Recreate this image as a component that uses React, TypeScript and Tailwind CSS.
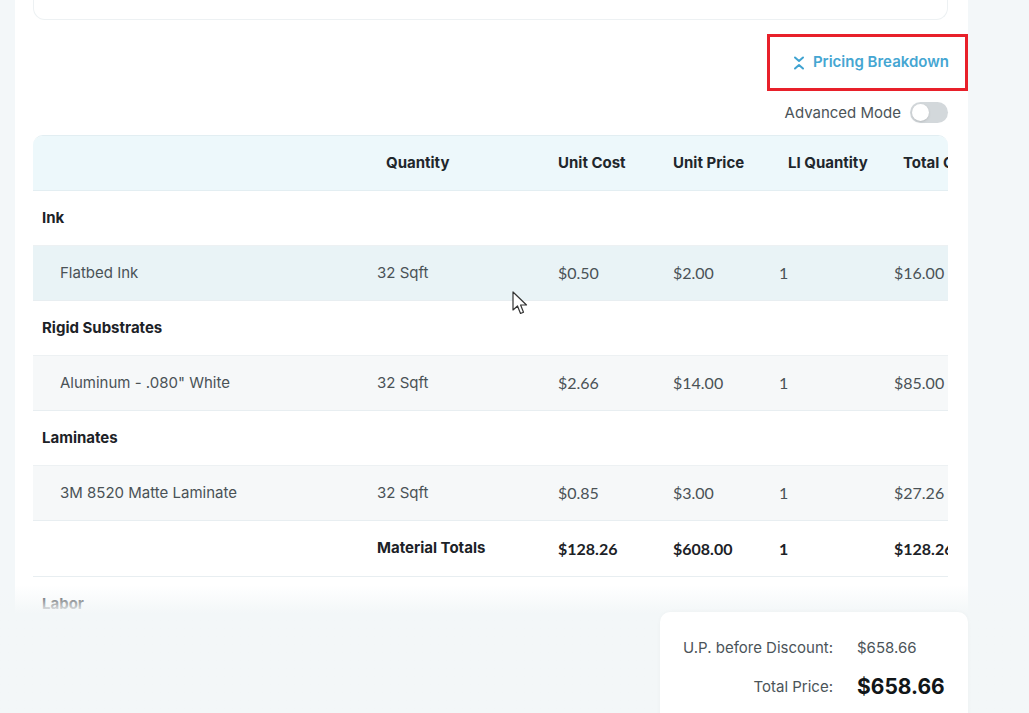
import React from "react";

const plex = { fontFamily: "Inter, 'Noto Sans', sans-serif" };
const lato = { fontFamily: "Lato, 'Noto Sans', sans-serif" };

type Row =
  | { kind: "cat"; name: string }
  | { kind: "item"; name: string; qty: string; cost: string; price: string; li: string; total: string; bg: string };

const rows: Row[] = [
  { kind: "cat", name: "Ink" },
  { kind: "item", name: "Flatbed Ink", qty: "32 Sqft", cost: "$0.50", price: "$2.00", li: "1", total: "$16.00", bg: "bg-[#e9f3f6]" },
  { kind: "cat", name: "Rigid Substrates" },
  { kind: "item", name: 'Aluminum - .080" White', qty: "32 Sqft", cost: "$2.66", price: "$14.00", li: "1", total: "$85.00", bg: "bg-[#f6f8f9]" },
  { kind: "cat", name: "Laminates" },
  { kind: "item", name: "3M 8520 Matte Laminate", qty: "32 Sqft", cost: "$0.85", price: "$3.00", li: "1", total: "$27.26", bg: "bg-[#f6f8f9]" },
];

const grid = "grid grid-cols-[335px_181px_115px_106px_115px_140px] w-[992px]";

export default function App() {
  return (
    <div className="relative w-full h-[713px] overflow-hidden bg-[#f3f7f9] flex" style={plex}>
      <div className="w-[15px] shrink-0" />
      <div className="w-[953px] shrink-0 bg-white pl-[18px] pr-[20px] flex flex-col">
        {/* top card (cut off) */}
        <div className="-mt-[20px] h-[40px] rounded-b-xl border border-[#edf1f3] border-t-0 bg-white" />

        {/* pricing breakdown link */}
        <div className="flex justify-end mt-[14px] -mr-[20px]">
          <div className="w-[201px] h-[57px] border-[3px] border-[#e8202a] flex items-center justify-end pr-[16px] gap-[8px]">
            <svg width="12" height="14" viewBox="0 0 12 14" fill="none" stroke="#3fa3d1" strokeWidth="2" strokeLinecap="round" strokeLinejoin="round">
              <path d="M2 1.5 L6 5 L10 1.5" />
              <path d="M2 12.5 L6 9 L10 12.5" />
            </svg>
            <span className="text-[15px] font-semibold text-[#45a6d2]">Pricing Breakdown</span>
          </div>
        </div>

        {/* advanced mode */}
        <div className="flex justify-end items-center gap-[9px] mt-[10px] h-[22px]">
          <span className="text-[15px] text-[#4b5459] pt-[2px]">Advanced Mode</span>
          <div className="w-[38px] h-[21px] rounded-full bg-[#d3d8db] flex items-center px-[2px]">
            <div className="w-[17px] h-[17px] rounded-full bg-white shadow-sm" />
          </div>
        </div>

        {/* table */}
        <div className="mt-[12px] w-[915px] overflow-hidden rounded-t-[10px] border-t border-[#e2eef2]">
          <div className={`${grid} h-[55px] items-center bg-[#edf8fb] border-b border-[#e3eef2] text-[15px] font-bold text-[#1f272c]`}>
            <div />
            <div className="pl-[18px]">Quantity</div>
            <div className="pl-[9px]">Unit Cost</div>
            <div className="pl-[9px]">Unit Price</div>
            <div className="pl-[18px]">LI Quantity</div>
            <div className="pl-[18px] whitespace-nowrap">Total Cost</div>
          </div>
          {rows.map((r, i) =>
            r.kind === "cat" ? (
              <div key={i} className={`${grid} h-[55px] items-center bg-white border-b border-[#edf1f3]`}>
                <div className="pl-[9px] text-[15px] font-bold text-[#1c2227]">{r.name}</div>
              </div>
            ) : (
              <div key={i} className={`${grid} h-[55px] items-center ${r.bg} border-b border-[#e8eef1] text-[#4a5256]`}>
                <div className="pl-[27px] text-[15px]">{r.name}</div>
                <div className="pl-[9px] text-[15px]">{r.qty}</div>
                <div className="pl-[9px] text-[16px]" style={lato}>{r.cost}</div>
                <div className="pl-[9px] text-[16px]" style={lato}>{r.price}</div>
                <div className="pl-[9px] text-[16px]" style={lato}>{r.li}</div>
                <div className="pl-[9px] text-[16px]" style={lato}>{r.total}</div>
              </div>
            )
          )}
          <div className={`${grid} h-[56px] items-center bg-white border-b border-[#e8eef1] text-[#1c2227] font-bold`}>
            <div />
            <div className="pl-[9px] text-[15px] font-bold">Material Totals</div>
            <div className="pl-[9px] text-[16px]" style={lato}>$128.26</div>
            <div className="pl-[9px] text-[16px]" style={lato}>$608.00</div>
            <div className="pl-[9px] text-[16px]" style={lato}>1</div>
            <div className="pl-[9px] text-[16px]" style={lato}>$128.26</div>
          </div>
          <div className={`${grid} h-[55px] items-center bg-white`}>
            <div className="pl-[9px] text-[15px] font-bold text-[#1c2227]">Labor</div>
          </div>
        </div>
      </div>
      <div className="flex-1" />

      {/* mouse cursor */}
      <svg className="absolute left-[512px] top-[291px]" width="18" height="26" viewBox="0 0 18 26">
        <path d="M1 1 L1 19 L5.5 15 L8.5 22.5 L11.5 21.2 L8.6 14 L14.5 14 Z" fill="white" stroke="#333" strokeWidth="1.2" strokeLinejoin="round" />
      </svg>

      {/* footer overlay */}
      <div className="absolute left-0 right-0 bottom-0 h-[128px] bg-gradient-to-b from-[#f3f7f8]/0 via-[#f3f7f8] via-[22%] to-[#f3f7f8] flex justify-end pr-[61px] pt-[27px]">
        <div className="w-[308px] h-[120px] bg-white rounded-t-[10px] shadow-[0_0_4px_rgba(0,0,0,0.03)] pl-[23px] pt-[25px]">
          <div className="flex items-center h-[22px]">
            <span className="w-[150px] text-right text-[15px] text-[#4b5459]">U.P. before Discount:</span>
            <span className="ml-[24px] text-[15px] text-[#4b5459]">$658.66</span>
          </div>
          <div className="flex items-center h-[30px] mt-[13px]">
            <span className="w-[150px] text-right text-[15px] text-[#4b5459]">Total Price:</span>
            <span className="ml-[24px] text-[21px] font-bold text-[#111618]">$658.66</span>
          </div>
        </div>
      </div>
    </div>
  );
}
